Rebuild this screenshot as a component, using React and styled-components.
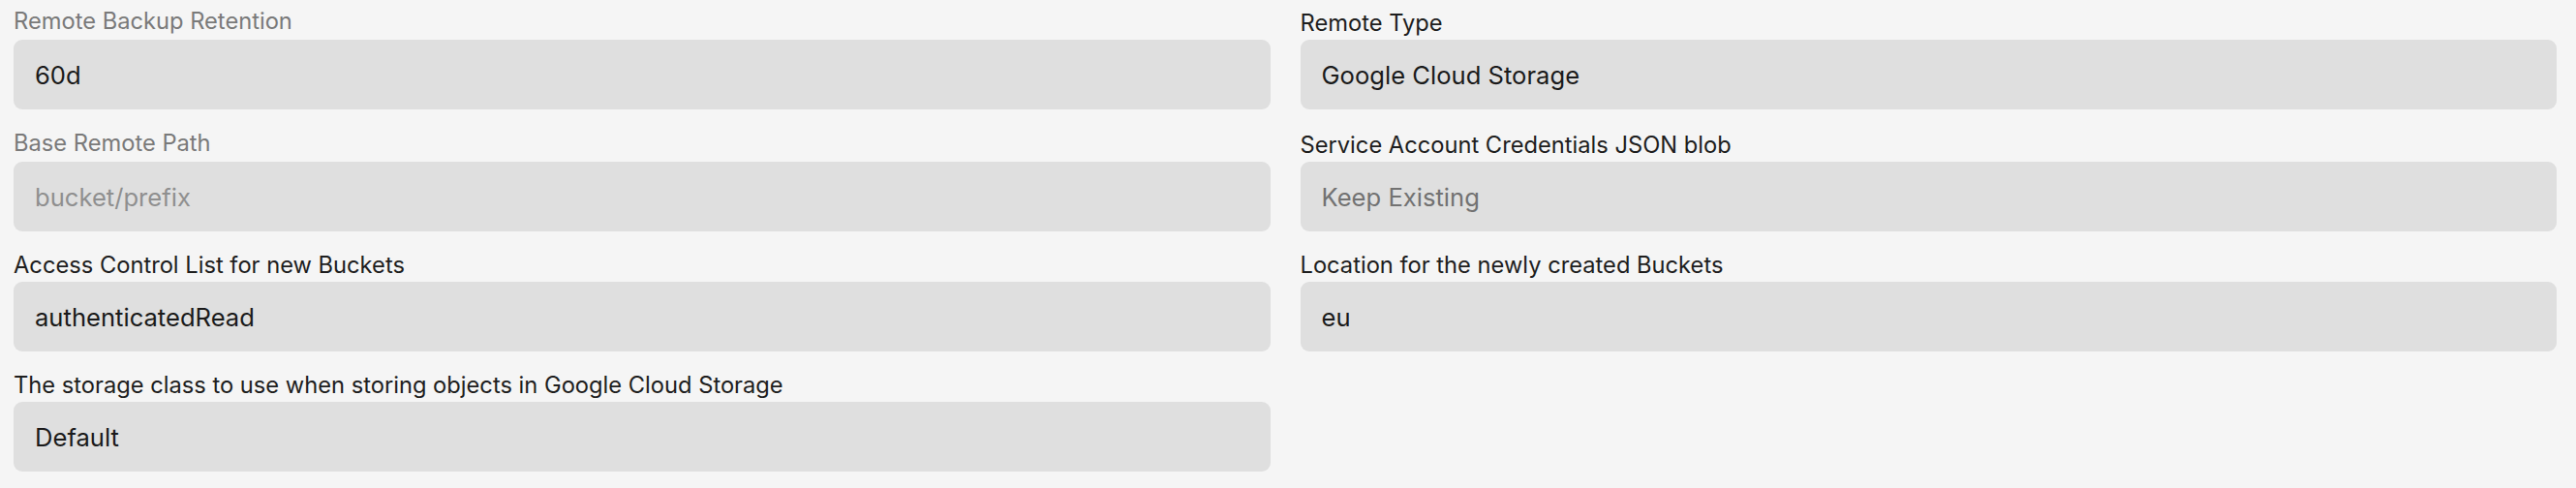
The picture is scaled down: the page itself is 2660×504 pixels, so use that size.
import styled, { createGlobalStyle } from 'styled-components'

const GlobalStyle = createGlobalStyle`
  html, body {
    margin: 0;
    padding: 0;
    background: #f5f5f5;
    font-family: Inter, "Noto Sans", sans-serif;
  }
`

const fields = [
  { label: 'Remote Backup Retention', value: '60d', muted: true },
  { label: 'Remote Type', value: 'Google Cloud Storage' },
  { label: 'Base Remote Path', placeholder: 'bucket/prefix', muted: true },
  { label: 'Service Account Credentials JSON blob', placeholder: 'Keep Existing' },
  { label: 'Access Control List for new Buckets', value: 'authenticatedRead' },
  { label: 'Location for the newly created Buckets', value: 'eu' },
  {
    label: 'The storage class to use when storing objects in Google Cloud Storage',
    value: 'Default',
  },
]

function App() {
  return (
    <>
      <GlobalStyle />
      <Form>
        {fields.map((f) => (
          <Field key={f.label}>
            <Label $muted={f.muted}>{f.label}</Label>
            <Input
              $muted={f.muted}
              readOnly
              defaultValue={f.value}
              placeholder={f.placeholder}
            />
          </Field>
        ))}
      </Form>
    </>
  )
}

export default App

const Form = styled.form`
  display: grid;
  grid-template-columns: 1fr 1fr;
  column-gap: 31px;
  row-gap: 21px;
  align-items: end;
  padding: 8px 20px 18px 14px;
`

const Field = styled.div`
  display: flex;
  flex-direction: column;
`

const Label = styled.label`
  font-size: 23.7px;
  line-height: 27px;
  color: ${(p) => (p.$muted ? '#7a7a7a' : '#1e1e1e')};
  margin-bottom: ${(p) => (p.$muted ? '6px' : '4px')};
  white-space: nowrap;
`

const Input = styled.input`
  box-sizing: border-box;
  width: 100%;
  height: 72px;
  padding: 0 22px;
  border: none;
  border-radius: 9px;
  background: #dfdfdf;
  font-family: inherit;
  font-size: 25.6px;
  color: #1a1a1a;
  outline: none;

  &::placeholder {
    color: ${(p) => (p.$muted ? '#8f8f8f' : '#727272')};
    opacity: 1;
  }
`
